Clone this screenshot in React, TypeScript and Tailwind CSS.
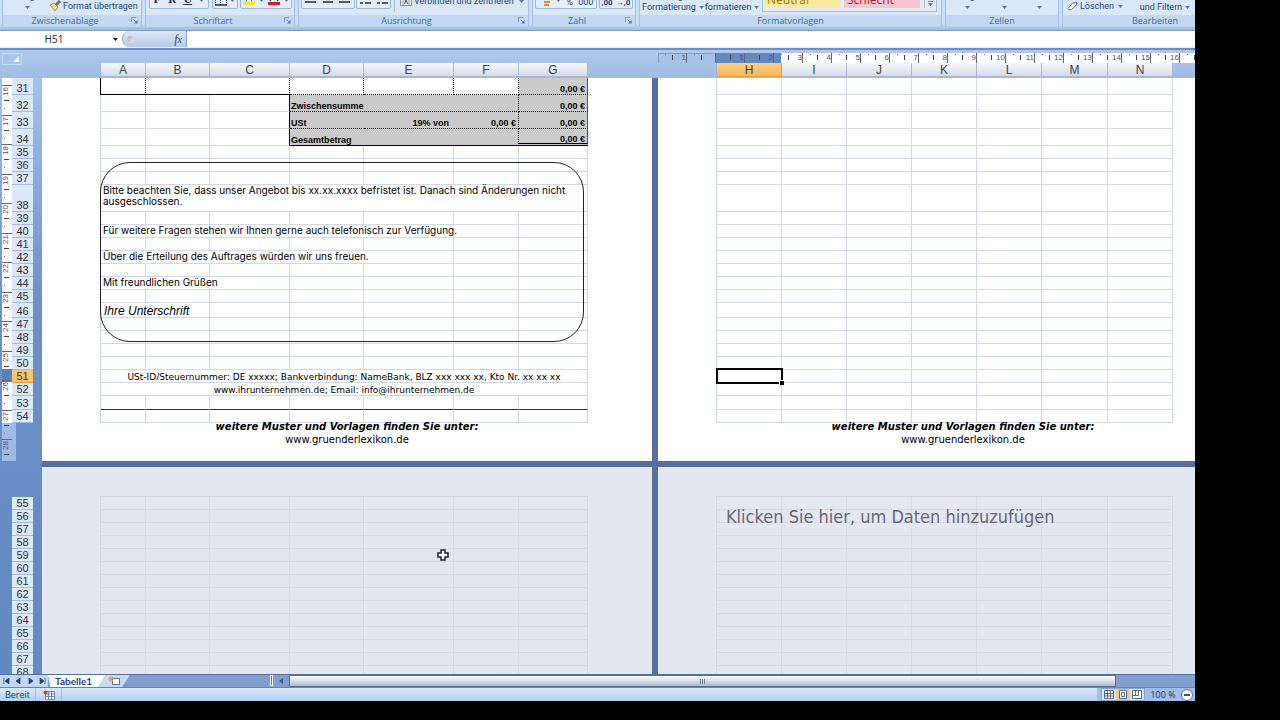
import React from 'react';
import clsx from 'clsx';

type Row = { n: number; h: string };

const tall = (n: number): Row => ({ n, h: 'h-[17px]' });
const normal = (n: number): Row => ({ n, h: 'h-[13px]' });
const range = (from: number, to: number) => Array.from({ length: to - from + 1 }, (_, i) => from + i);

const upperRows: Row[] = [
  ...range(31, 34).map(tall),
  ...range(35, 37).map(normal),
  { n: 38, h: 'h-[27px]' },
  ...range(39, 45).map(normal),
  { n: 46, h: 'h-[15px]' },
  ...range(47, 52).map(normal),
  { n: 53, h: 'h-[14px]' },
  normal(54),
];
const lowerRows: Row[] = range(55, 68).map(normal);

const leftCols = [
  { name: 'A', w: 'w-[45px]' },
  { name: 'B', w: 'w-[64px]' },
  { name: 'C', w: 'w-[80px]' },
  { name: 'D', w: 'w-[74px]' },
  { name: 'E', w: 'w-[90px]' },
  { name: 'F', w: 'w-[65px]' },
  { name: 'G', w: 'w-[69px]' },
];
const rightCols = [
  { name: 'H', w: 'w-[65px]' },
  { name: 'I', w: 'w-[65px]' },
  { name: 'J', w: 'w-[65px]' },
  { name: 'K', w: 'w-[65px]' },
  { name: 'L', w: 'w-[65px]' },
  { name: 'M', w: 'w-[66px]' },
  { name: 'N', w: 'w-[65px]' },
];

type Cell = { span?: number; text?: React.ReactNode; cls?: string };

const grey = 'bg-[#cbcbcb] font-[Liberation_Sans] text-[9px] font-bold';
const dots = 'border-b-black [border-bottom-style:dotted]';
const dotR = 'border-r-black [border-right-style:dotted]';
const edge = 'border-r-[#555] pr-[2px] text-right';
const body = 'pl-[2px] font-[Inter] text-[10px] leading-[11px] whitespace-nowrap';

// cells that differ from the plain grid, keyed by row number
const content: Record<number, Cell[]> = {
  31: [
    { cls: `${dotR} border-b-black shadow-[-1px_0_0_#000]` },
    { span: 2, cls: `${dotR} border-b-black` },
    { cls: `${dotR} ${dots}` },
    { cls: `${dotR} ${dots}` },
    { cls: `${dotR} ${dots}` },
    { text: '0,00 €', cls: `${grey} ${dots} ${edge}` },
  ],
  32: [
    {},
    {},
    { cls: 'border-r-black' },
    { span: 3, text: 'Zwischensumme', cls: `${grey} ${dots} ${dotR} pl-[1px]` },
    { text: '0,00 €', cls: `${grey} ${dots} ${edge}` },
  ],
  33: [
    {},
    {},
    { cls: 'border-r-black' },
    { text: 'USt', cls: `${grey} ${dots} border-r-[#cbcbcb] pl-[1px]` },
    { text: '19% von', cls: `${grey} ${dots} border-r-[#cbcbcb] pr-1 text-right` },
    { text: '0,00 €', cls: `${grey} ${dots} ${dotR} pr-[2px] text-right` },
    { text: '0,00 €', cls: `${grey} ${dots} ${edge}` },
  ],
  34: [
    {},
    {},
    { cls: 'border-r-black' },
    { span: 3, text: 'Gesamtbetrag', cls: `${grey} ${dotR} border-b-black pl-[1px]` },
    { text: '0,00 €', cls: `${grey} ${edge} border-b-[3px] [border-bottom-style:double] border-b-black leading-[8px]` },
  ],
  38: [
    {
      span: 7,
      text: (
        <>
          Bitte beachten Sie, dass unser Angebot bis xx.xx.xxxx befristet ist. Danach sind Änderungen nicht
          <br />
          ausgeschlossen.
        </>
      ),
      cls: `${body} pb-[4px]`,
    },
  ],
  40: [{ span: 6, text: 'Für weitere Fragen stehen wir Ihnen gerne auch telefonisch zur Verfügung.', cls: `${body} pb-px` }, {}],
  42: [{ span: 5, text: 'Über die Erteilung des Auftrages würden wir uns freuen.', cls: `${body} pb-px` }, {}, {}],
  44: [{ span: 3, text: 'Mit freundlichen Grüßen', cls: `${body} pb-px` }, {}, {}, {}, {}],
  46: [
    { span: 2, text: 'Ihre Unterschrift', cls: 'pl-[3px] font-[Liberation_Sans] text-[12px] leading-[12px] italic' },
    {},
    {},
    {},
    {},
    {},
  ],
  51: [
    {
      span: 7,
      text: 'USt-ID/Steuernummer: DE xxxxx; Bankverbindung: NameBank, BLZ xxx xxx xx, Kto Nr. xx xx xx',
      cls: 'text-center text-[9px]',
    },
  ],
  52: [{ span: 7, text: 'www.ihrunternehmen.de; Email: info@ihrunternehmen.de', cls: 'text-center text-[9px]' }],
  53: range(1, 7).map(() => ({ cls: 'border-b-[#333]' })),
};

const plain: Cell[] = range(1, 7).map(() => ({}));

type SheetProps = {
  cols: typeof leftCols;
  rows: Row[];
  cells?: Record<number, Cell[]>;
  selected?: number;
  dim?: boolean;
};

const Sheet: React.FC<SheetProps> = ({ cols, rows, cells = {}, selected, dim }) => (
  <table
    className={clsx(
      'ml-[58px] w-0 table-fixed border-separate border-spacing-0 border-l font-[DejaVu_Sans] leading-[10px] text-black',
      dim ? 'border-[#d6d7e0]' : 'border-[#ccd3dc]',
      dim && 'border-t',
    )}
  >
    <colgroup>
      {cols.map((c) => (
        <col key={c.name} className={c.w} />
      ))}
    </colgroup>
    <tbody>
      {rows.map((row) => (
        <tr key={row.n} className={row.h}>
          {(cells[row.n] ?? plain).map((cell, i) => (
            <td
              key={i}
              colSpan={cell.span}
              className={clsx(
                'border-r border-b p-0 align-bottom',
                dim ? 'border-[#d9dae3]' : 'border-[#d3d9e2]',
                selected === row.n && i === 0 && 'relative',
                cell.cls,
              )}
            >
              {cell.text}
              {selected === row.n && i === 0 && (
                <span className="absolute -top-[2px] -right-[2px] -bottom-[2px] -left-px border-2 border-black">
                  <span className="absolute -right-[3px] -bottom-[3px] size-[5px] border-t border-l border-white bg-black" />
                </span>
              )}
            </td>
          ))}
        </tr>
      ))}
    </tbody>
  </table>
);

const ColumnHeads: React.FC<{ cols: typeof leftCols; active?: string }> = ({ cols, active }) => (
  <div className="ml-[58px] flex h-[14px] w-max border-l border-[#9fb4d2] font-[Liberation_Sans] text-[12px] leading-[14px] text-[#444]">
    {cols.map((c) => (
      <div
        key={c.name}
        className={clsx(
          c.w,
          'border-r border-b text-center',
          c.name === active
            ? 'border-[#e59a3c] bg-linear-to-b from-[#fbd087] to-[#f4b85c]'
            : 'border-[#a9b8ce] bg-linear-to-b from-[#f7f9fc] to-[#d3dbe9]',
        )}
      >
        {c.name}
      </div>
    ))}
  </div>
);

const RowHeads: React.FC<{ rows: Row[] }> = ({ rows }) => (
  <>
    {rows.map((r) => (
      <div
        key={r.n}
        className={clsx(
          r.h,
          'flex shrink-0 items-end justify-center border-b',
          r.n === 51 ? 'border-[#e59a3c] bg-[#f9c66f]' : 'border-[#a3bbdd] bg-[#dce9fa]',
        )}
      >
        {r.n}
      </div>
    ))}
  </>
);

const RulerUnit: React.FC<{ label: string }> = ({ label }) => (
  <div className="flex h-[10px] w-[29px] shrink-0 items-start border-r border-[#666]">
    <span className="mt-px ml-[7px] h-px w-px bg-[#777]" />
    <span className="mt-[2px] ml-[6px] h-[5px] w-px bg-[#444]" />
    <span className="ml-auto">{label}</span>
  </div>
);

const HorizontalRuler = () => (
  <div className="flex h-[10px] overflow-hidden bg-[linear-gradient(to_right,#a5c2e6_58px,#6288bd_58px_123px,#fff_123px)] font-[Liberation_Sans] text-[8px] leading-[10px] text-[#555]">
    <div className="flex w-[58px] shrink-0 shadow-[inset_1px_1px_0_#7f9fcb]">
      <RulerUnit label="1" />
      <RulerUnit label="" />
    </div>
    {range(1, 17).map((n) => (
      <RulerUnit key={n} label={String(n)} />
    ))}
  </div>
);

const VerticalRuler = () => (
  <div className="ml-[2px] flex h-[383px] w-[14px] shrink-0 flex-col overflow-hidden bg-[linear-gradient(to_bottom,#fff_291px,#5b82bb_291px_304px,#fff_304px_345px,#9fbae4_345px)]">
    <div className="h-2 w-[10px] shrink-0 border-b border-[#666]" />
    {range(16, 28).map((n) => (
      <div
        key={n}
        className={clsx(
          n % 2 ? 'h-[29px]' : 'h-[30px]',
          'flex w-[10px] shrink-0 flex-col items-start border-b border-[#666] font-[Liberation_Sans] text-[8px] leading-[8px] text-[#555]',
        )}
      >
        <span className="mt-px rotate-180 [writing-mode:vertical-rl]">{n}</span>
        <span className="mt-[4px] ml-[2px] h-px w-[5px] bg-[#444]" />
        <span className="mt-[7px] ml-[2px] size-px bg-[#777]" />
      </div>
    ))}
  </div>
);

const Arrow: React.FC<{ className?: string }> = ({ className }) => (
  <svg viewBox="0 0 5 3" className={clsx('h-[3px] w-[5px] shrink-0', className)}>
    <path d="M0 0h5L2.500 3z" fill="#5878a8" />
  </svg>
);

const Launcher = () => (
  <button aria-label="Dialogfeld öffnen" className="absolute top-[2px] right-[3px]">
    <svg viewBox="0 0 8 8" className="size-[7px]">
      <path d="M.5 6V.5H6" fill="none" stroke="#7390bb" />
      <path d="M3 3l3 3" stroke="#5878a8" />
      <path d="M7.500 3.500v4h-4z" fill="#5878a8" />
    </svg>
  </button>
);

const Group: React.FC<{ label: string; width: string; launcher?: boolean; children: React.ReactNode }> = ({
  label,
  width,
  launcher,
  children,
}) => (
  <section className={clsx(width, 'flex h-[28px] shrink-0 flex-col overflow-hidden rounded-b-[3px] border-x border-b border-[#a3c0e0] bg-[#d9e7f6]')}>
    <div className="flex h-[15px] items-end overflow-hidden font-[Roboto] text-[#27457e]">{children}</div>
    <div className={clsx('relative h-[12px] bg-[#c1d9f0] text-center leading-[12px] text-[#4068a8]', launcher && 'pr-[14px]')}>
      {label}
      {launcher && <Launcher />}
    </div>
  </section>
);

const ToolBox: React.FC<{ className: string; children: React.ReactNode }> = ({ className, children }) => (
  <div className={clsx('mb-[6px] flex h-[20px] shrink-0 items-end justify-around rounded-b-[2px] border border-[#9db7d9] bg-[#e4edf8]', className)}>
    {children}
  </div>
);

const tool = 'font-[Liberation_Serif] text-[12px] leading-[12px] mb-[3px] text-[#1d2b45]';

const Lines: React.FC<{ d: string }> = ({ d }) => (
  <svg viewBox="0 0 12 12" className="mb-[3px] size-3">
    <path d={d} stroke="#222b40" strokeWidth="1.500" fill="none" />
  </svg>
);

const Stacked: React.FC<{ top: string; bottom?: string; className?: string }> = ({ top, bottom, className }) => (
  <button className={clsx('flex h-[24px] shrink-0 flex-col items-center leading-[11px]', className)}>
    <span>{top}</span>
    {bottom ? (
      <span className="flex items-center gap-[3px]">
        {bottom}
        <Arrow />
      </span>
    ) : (
      <Arrow className="mt-[4px]" />
    )}
  </button>
);

const Ribbon = () => (
  <header className="flex h-[31px] shrink-0 items-start gap-[3px] overflow-hidden border-b border-[#7f9fc4] bg-linear-to-b from-[#c9dff5] from-80% to-[#9dbbd9] pl-[2px] font-[Open_Sans] text-[9px] whitespace-nowrap">
    <Group label="Zwischenablage" width="w-[140px]" launcher>
      <Stacked top="Einfügen" className="ml-[3px] w-[42px]" />
      <button className="mb-[3px] ml-[1px] flex items-center gap-[2px] leading-[12px]">
        <svg viewBox="0 0 12 12" className="size-3">
          <path d="M1 5l5 6 3-4-4-4z" fill="#f2df8d" stroke="#9c7e32" strokeWidth=".8" />
          <path d="M6 4l4-4 2 2-4 4z" fill="#5c6f92" />
        </svg>
        Format übertragen
      </button>
    </Group>
    <Group label="Schriftart" width="w-[150px]" launcher>
      <ToolBox className="ml-[3px] w-[60px]">
        <button className={clsx(tool, 'font-bold')}>F</button>
        <button className={clsx(tool, 'font-bold italic')}>K</button>
        <button className={clsx(tool, 'font-bold underline')}>U</button>
        <Arrow className="mb-[6px]" />
      </ToolBox>
      <ToolBox className="ml-[3px] w-[26px]">
        <svg viewBox="0 0 12 12" className="mb-[2px] size-3">
          <path d="M.5 0v11M5.500 0v11M11.500 0v11M0 5.500h12" stroke="#5a6a88" strokeDasharray="1 1" />
          <path d="M0 11h12" stroke="#222b40" strokeWidth="1.500" />
        </svg>
        <Arrow className="mb-[6px]" />
      </ToolBox>
      <ToolBox className="ml-[2px] w-[52px]">
        <svg viewBox="0 0 12 12" className="mb-[2px] size-3">
          <path d="M2 5l4-4 4 4-4 4z" fill="#fff" stroke="#5a6a88" />
          <path d="M0 7h12v4H0z" fill="#f4ee2c" />
        </svg>
        <Arrow className="mb-[6px]" />
        <svg viewBox="0 0 12 12" className="mb-[2px] size-3">
          <path d="M2 7l4-8 4 8M4 4h4" fill="none" stroke="#27457e" strokeWidth="1.500" />
          <path d="M0 8h12v3H0z" fill="#dc1b26" />
        </svg>
        <Arrow className="mb-[6px]" />
      </ToolBox>
    </Group>
    <Group label="Ausrichtung" width="w-[231px]" launcher>
      <ToolBox className="ml-[2px] w-[54px]">
        <Lines d="M0 2h11M0 5.500h8M0 9h11" />
        <Lines d="M0 2h11M2 5.500h8M1 9h10" />
        <Lines d="M0 2h11M4 5.500h7M0 9h11" />
      </ToolBox>
      <ToolBox className="ml-[1px] w-[35px]">
        <Lines d="M0 6h5M6 2h6M6 6h6M1 10h3M6 10h6" />
        <Lines d="M0 6h5M6 2h6M6 6h6M1 10h3M6 10h6" />
      </ToolBox>
      <span className="ml-[3px] h-3 w-px shrink-0 self-start bg-[#a7bcd9]" />
      <button className="mb-[8px] ml-[5px] flex shrink-0 items-center gap-[2px] leading-[12px]">
        <svg viewBox="0 0 12 12" className="size-3">
          <path d="M.5 1.500h11v9H.5zM3 .500v10M9 .500v10" fill="#fff" stroke="#7b8fb1" />
          <path d="M4.500 9L6 4.500 7.500 9" fill="none" stroke="#27457e" />
        </svg>
        Verbinden und zentrieren
        <Arrow className="ml-[3px]" />
      </button>
    </Group>
    <Group label="Zahl" width="w-[104px]" launcher>
      <ToolBox className="ml-[2px] w-[62px]">
        <svg viewBox="0 0 12 12" className="mb-[2px] size-3">
          <path d="M0 1h10v5H0z" fill="#8b93a5" />
          <path d="M6 5h6M5 8h6M5 11h5" stroke="#c99524" strokeWidth="2" />
        </svg>
        <Arrow className="mb-[6px]" />
        <button className="leading-[12px]">%</button>
        <button className="leading-[12px]">000</button>
      </ToolBox>
      <ToolBox className="ml-[2px] w-[34px]">
        <button className="text-[8px] leading-[10px] font-bold">,00</button>
        <button className="text-[8px] leading-[10px] font-bold">→,0</button>
      </ToolBox>
    </Group>
    <Group label="Formatvorlagen" width="w-[303px]">
      <Stacked top="Bedingte" bottom="Formatierung" className="ml-[2px] w-[62px]" />
      <Stacked top="Als Tabelle" bottom="formatieren" className="ml-[1px] w-[54px]" />
      <div className="mb-[3px] ml-[3px] flex h-[24px] shrink-0 gap-1 border border-[#a7bfdd] bg-[#e4edf8] px-px pb-[3px] font-[Open_Sans] text-[12px]">
        <button className="flex w-[76px] items-end bg-[#fdea9c] pb-px pl-[3px] leading-[15px] text-[#9c7500]">Neutral</button>
        <button className="flex w-[76px] items-end bg-[#fbc5cf] pb-px pl-[3px] leading-[15px] text-[#a3202e]">Schlecht</button>
        <button aria-label="Weitere" className="flex w-[11px] flex-col items-center justify-end gap-px border-l border-[#a7bfdd] pb-[2px]">
          <span className="h-px w-[5px] bg-[#5878a8]" />
          <Arrow />
        </button>
      </div>
    </Group>
    <Group label="Zellen" width="w-[114px]">
      <Stacked top="Einfügen" className="ml-[2px] w-[38px]" />
      <Stacked top="Löschen" className="w-[36px]" />
      <Stacked top="Format" className="w-[34px]" />
    </Group>
    <Group label="Bearbeiten" width="w-[186px]">
      <button className="mb-[3px] ml-[4px] flex w-[56px] shrink-0 items-center gap-[2px] leading-[12px]">
        <svg viewBox="0 0 12 10" className="h-[10px] w-3">
          <path d="M1 8l5-6 5-1-1 3-5 5H2z" fill="#fff" stroke="#4b5f85" />
        </svg>
        Löschen
        <Arrow className="ml-[2px]" />
      </button>
      <Stacked top="Sortieren" bottom="und Filtern" className="ml-[16px] w-[52px]" />
    </Group>
  </header>
);

const FormulaBar = () => (
  <div className="flex h-[19px] shrink-0 border-b-2 border-[#6e8fc0] bg-[#e6effa] pb-px">
    <label htmlFor="namebox" className="sr-only">Namenfeld</label>
    <input id="namebox" defaultValue="H51" className="w-[108px] bg-white text-center font-[Open_Sans] text-[10px] text-[#222] outline-none" />
    <button aria-label="Namen" className="flex w-[14px] items-center justify-center bg-white">
      <svg viewBox="0 0 5 3" className="h-[3px] w-[5px]">
        <path d="M0 0h5L2.500 3z" fill="#111" />
      </svg>
    </button>
    <div className="flex flex-1 bg-white">
      <div className="flex w-[65px] items-center justify-between rounded-l-full border-r border-l border-[#8ba7cf] bg-linear-to-b from-[#dfe7f3] to-[#b5cbec] pr-1 pl-1">
        <span className="size-[7px] rounded-full bg-linear-to-br from-[#a4adbd] to-[#e9eff8]" />
        <button aria-label="Funktion einfügen" className="font-[Liberation_Serif] text-[12px] leading-none text-[#34435f] italic">
          f<span className="text-[10px]">x</span>
        </button>
      </div>
      <input aria-label="Bearbeitungsleiste" className="min-w-0 flex-1 bg-white outline-none" />
    </div>
  </div>
);

const PageFooter = () => (
  <div className="w-[610px] text-center font-[DejaVu_Sans] text-[10px] leading-[13px] text-black">
    <p className="-mt-[3px] font-bold italic">weitere Muster und Vorlagen finden Sie unter:</p>
    <p>www.gruenderlexikon.de</p>
  </div>
);

const CrossCursor = () => (
  <svg viewBox="0 0 12 12" className="absolute top-[82px] left-[395px] size-3">
    <path d="M4 1h4v3h3v4H8v3H4V8H1V4h3z" fill="#fff" stroke="#1c2233" strokeWidth="1.500" />
  </svg>
);

const Workspace = () => (
  <main className="flex min-h-0 flex-1 flex-col overflow-hidden bg-linear-to-b from-[#adc8ee] via-[#6d90c6] via-40% to-[#6389c4]">
    <div className="flex h-[28px] shrink-0 bg-linear-to-b from-[#b1c9ec] to-[#9fbce4]">
      <div className="w-[42px] shrink-0">
        <button aria-label="Alles markieren" className="mt-[3px] ml-[2px] flex h-[12px] w-5 items-end justify-end border border-[#c4d9f5] bg-[#a9c5ea] p-[2px]">
          <svg viewBox="0 0 6 6" className="size-[6px]">
            <path d="M6 0v6H0z" fill="#eef5fd" />
          </svg>
        </button>
      </div>
      <div className="w-[616px] shrink-0 pt-[13px]">
        <ColumnHeads cols={leftCols} />
      </div>
      <div className="min-w-0 flex-1 overflow-hidden pt-[3px]">
        <HorizontalRuler />
        <ColumnHeads cols={rightCols} active="H" />
      </div>
    </div>
    <div className="flex min-h-0 flex-1 overflow-hidden">
      <div className="flex w-[42px] shrink-0">
        <VerticalRuler />
        <div className="-ml-1 flex w-[21px] shrink-0 flex-col font-[Liberation_Sans] text-[11px] leading-[11px] text-[#333]">
          <RowHeads rows={upperRows} />
          <div className="h-[74px] shrink-0" />
          <RowHeads rows={lowerRows} />
        </div>
      </div>
      <div className="grid min-w-0 flex-1 grid-cols-[610px_1fr] grid-rows-[383px_1fr] gap-[6px] bg-[#566f9d]">
        <div className="relative overflow-hidden bg-white">
          <Sheet cols={leftCols} rows={upperRows} cells={content} />
          <div className="absolute top-[84px] left-[58px] h-[180px] w-[484px] rounded-[30px] border border-[#222]" />
          <PageFooter />
        </div>
        <div className="overflow-hidden bg-white">
          <Sheet cols={rightCols} rows={upperRows} selected={51} />
          <PageFooter />
        </div>
        <div className="relative overflow-hidden bg-[#e5e7f0] pt-[29px]">
          <Sheet cols={leftCols} rows={lowerRows} dim />
          <CrossCursor />
        </div>
        <div className="relative overflow-hidden bg-[#e5e7f0] pt-[29px]">
          <Sheet cols={rightCols} rows={lowerRows} dim />
          <p className="absolute top-[38px] left-[68px] font-[DejaVu_Sans_Condensed] text-[18px] leading-6 whitespace-nowrap text-[#666873]">
            Klicken Sie hier, um Daten hinzuzufügen
          </p>
        </div>
      </div>
    </div>
  </main>
);

const navIcons = [
  { label: 'Erstes Blatt', d: 'M1 0v6M6 0v6L2 3z' },
  { label: 'Voriges Blatt', d: 'M5 0v6L1 3z' },
  { label: 'Nächstes Blatt', d: 'M2 0v6l4-3z' },
  { label: 'Letztes Blatt', d: 'M1 0v6l4-3zM6 0v6' },
];

const SheetTabs = () => (
  <nav className="flex h-[13px] shrink-0 border-t border-[#54709e] bg-[#809fce]">
    <div className="flex w-[48px] shrink-0 items-center justify-around bg-[#c3d7f2]">
      {navIcons.map((icon) => (
        <button key={icon.label} aria-label={icon.label}>
          <svg viewBox="0 0 7 6" className="h-[6px] w-[7px]">
            <path d={icon.d} fill="#1f3f7c" stroke="#1f3f7c" strokeWidth=".7" />
          </svg>
        </button>
      ))}
    </div>
    <button className="w-[58px] shrink-0 bg-white pl-[7px] text-left font-[Lato] text-[10px] leading-[12px] font-bold text-[#27457e] [clip-path:polygon(0_0,100%_0,86%_100%,4%_100%)]">
      Tabelle1
    </button>
    <button aria-label="Tabelle einfügen" className="-ml-[8px] flex w-[32px] shrink-0 items-center justify-center bg-[#c9dbf4] [clip-path:polygon(25%_0,100%_0,75%_100%,0_100%)]">
      <svg viewBox="0 0 12 10" className="h-[10px] w-3">
        <path d="M4.500 2.500h7v6h-7z" fill="#fff" stroke="#5c7096" />
        <path d="M3 0v6M0 3h6M1 1l4 4M5 1L1 5" stroke="#e0a03c" />
      </svg>
    </button>
    <div className="flex min-w-0 flex-1 pl-[140px]">
      <span className="h-[11px] w-[3px] shrink-0 border border-white bg-[#54709e]" />
      <button aria-label="Nach links" className="flex w-4 shrink-0 items-center justify-center">
        <svg viewBox="0 0 4 6" className="h-[6px] w-1">
          <path d="M4 0v6L0 3z" fill="#3c5d94" />
        </svg>
      </button>
      <div className="mr-[79px] flex flex-1 items-center justify-center gap-px border border-[#5c6f92] bg-linear-to-b from-white via-[#d5dde9] to-[#a9bad2]">
        {range(1, 3).map((i) => (
          <span key={i} className="h-[5px] w-px bg-[#6d7f9f]" />
        ))}
      </div>
    </div>
  </nav>
);

const viewIcons = [
  { label: 'Normal', d: 'M.5 .5h9v8h-9zM.5 3.500h9M.5 6h9M3.500 .500v8M6.500 .500v8', on: false },
  { label: 'Seitenlayout', d: 'M1.500 .500h7v8h-7zM3.500 2.500h3v4h-3z', on: true },
  { label: 'Umbruchvorschau', d: 'M.5 .5h9v8h-9zM3.500 .500v5M6.500 .500v5M.5 5.500h6', on: false },
];

const StatusBar = () => (
  <footer className="flex h-[14px] shrink-0 items-center border-t border-[#6384b5] bg-linear-to-b from-[#dbe9fb] to-[#b5cff2] font-[Open_Sans] text-[9px] leading-[12px] text-[#1f3560]">
    <span className="ml-[5px] w-[30px]">Bereit</span>
    <div className="flex h-full w-[27px] items-center justify-center border-x border-[#a3bfe6]">
      <svg viewBox="0 0 12 10" className="h-[10px] w-3">
        <path d="M2.500 1.500h9v8h-9zM2.500 4h9M2.500 6.500h9M5.500 2v7M8.500 2v7" fill="#fff" stroke="#7188b0" />
        <circle cx="2.500" cy="2.500" r="2" fill="#cc3a3a" />
      </svg>
    </div>
    <div className="ml-auto flex h-full items-center bg-[#9fbfea]">
      <div className="ml-[4px] flex h-full border border-[#8aa6d0] bg-[#d9e6f7]">
        {viewIcons.map((v) => (
          <button key={v.label} aria-label={v.label} className={clsx('flex w-[14px] items-center justify-center', v.on && 'bg-[#f0c987]')}>
            <svg viewBox="0 0 10 9" className="h-[9px] w-[10px]">
              <path d={v.d} fill="#fff" stroke="#5c6b86" />
            </svg>
          </button>
        ))}
      </div>
      <span className="w-[36px] text-center">100 %</span>
      <button aria-label="Verkleinern" className="mr-[2px] flex size-[12px] items-center justify-center rounded-full border border-[#5878a8] bg-white">
        <span className="h-[2px] w-[6px] bg-[#34527f]" />
      </button>
    </div>
  </footer>
);

export default function App() {
  return (
    <div className="h-screen overflow-hidden bg-black pr-[85px] pb-[19px]">
      <div className="flex h-full flex-col overflow-hidden">
        <Ribbon />
        <FormulaBar />
        <Workspace />
        <SheetTabs />
        <StatusBar />
      </div>
    </div>
  );
}
